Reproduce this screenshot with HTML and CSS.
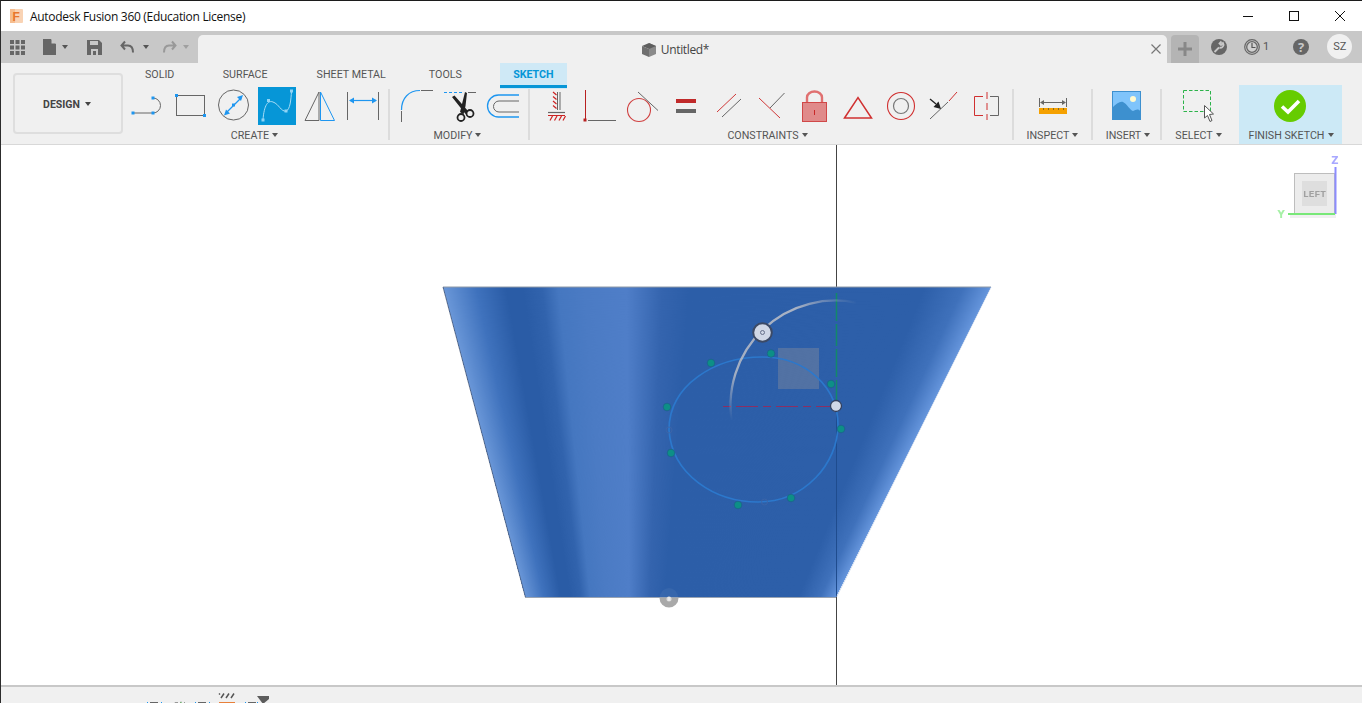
FILE: index.html
```html
<!DOCTYPE html>
<html lang="en">
<head>
<meta charset="utf-8">
<title>Autodesk Fusion 360</title>
<link rel="stylesheet" href="styles.css">
</head>
<body>
<div class="window">
  <header class="titlebar">
    <div class="title-left">
      <svg class="logo" viewBox="0 0 14 15" width="14" height="15"><rect x="0" y="0" width="13" height="14" rx="1" fill="#f9d3b4"/><rect x="0" y="0" width="5" height="14" fill="#f6bd8f"/><text x="2.5" y="11.5" class="logo-f">F</text></svg>
      <span class="title-text">Autodesk Fusion 360 (Education License)</span>
    </div>
    <div class="winbtns">
      <svg viewBox="0 0 12 12" width="12" height="12"><path d="M1 6.500H11" stroke="#111" fill="none"/></svg>
      <svg viewBox="0 0 12 12" width="12" height="12"><rect x="1.500" y="1.500" width="9" height="9" stroke="#111" fill="none"/></svg>
      <svg viewBox="0 0 12 12" width="12" height="12"><path d="M1 1L11 11M11 1L1 11" stroke="#111" fill="none"/></svg>
    </div>
  </header>

  <div class="tabbar">
    <div class="quick">
      <svg class="q-grid" viewBox="0 0 15 15" width="15" height="15"><path fill="#666" d="M0 0h4v4H0zM5.500 0h4v4h-4zM11 0h4v4h-4zM0 5.500h4v4H0zM5.500 5.500h4v4h-4zM11 5.500h4v4h-4zM0 11h4v4H0zM5.500 11h4v4h-4zM11 11h4v4h-4z"/></svg>
      <svg class="q-doc" viewBox="0 0 14 16" width="14" height="16"><path fill="#666" d="M0 0h8l5 5v11H0z"/><path fill="#c8c8c8" d="M8.500 0v4.500H13v-.5L9 0z"/></svg>
      <span class="caret q-c1"></span>
      <svg class="q-save" viewBox="0 0 15 15" width="15" height="15"><path fill="#666" d="M0 0h12l3 3v12H0z"/><path fill="#c8c8c8" d="M3 1h8v4H3zM4 9h7v6H9v-4H6v4H4z"/></svg>
      <svg class="q-undo" viewBox="0 0 15 14" width="15" height="14"><path d="M5 1.500L1.500 5.500 5 9.500M2 5.500h6c4 0 5 3 5 7" fill="none" stroke="#666" stroke-width="2"/></svg>
      <span class="caret q-c2"></span>
      <svg class="q-redo" viewBox="0 0 15 14" width="15" height="14"><path d="M10 1.500L13.500 5.500 10 9.500M13 5.500H7c-4 0-5 3-5 7" fill="none" stroke="#999" stroke-width="2"/></svg>
      <span class="caret caret-light q-c3"></span>
    </div>
    <div class="doc-tab">
      <div class="doc-name">
        <svg viewBox="0 0 16 16" width="16" height="16"><path fill="#8a8a8a" d="M8 1l7 3v8l-7 3z"/><path fill="#5e5e5e" d="M8 1L1 4l7 3 7-3z"/><path fill="#6f6f6f" d="M1 4l7 3v8l-7-3z"/></svg>
        <span>Untitled*</span>
      </div>
      <svg class="doc-close" viewBox="0 0 10 10" width="10" height="10"><path d="M0.500 0.500L9.500 9.500M9.500 0.500L0.500 9.500" stroke="#777" stroke-width="1.200"/></svg>
    </div>
    <div class="new-tab"><svg viewBox="0 0 14 14" width="14" height="14"><path d="M7 0v14M0 7h14" stroke="#888" stroke-width="3"/></svg></div>
    <div class="status">
      <svg class="s-wrench" viewBox="0 0 16 16" width="16" height="16"><circle cx="8" cy="8" r="8" fill="#666"/><path d="M3.500 13L8 8.500M8.500 8.500a3 3 0 0 0 3.500-4.500l-2 2-1.500-1.500 2-2" stroke="#c8c8c8" stroke-width="1.800" fill="none"/></svg>
      <svg class="s-clock" viewBox="0 0 16 16" width="16" height="16"><circle cx="8" cy="8" r="7.300" fill="none" stroke="#666" stroke-width="1.200"/><circle cx="8" cy="8" r="5.300" fill="#d0d0d0" stroke="#666" stroke-width="1.300"/><path d="M8 4v4.500h3.500" stroke="#555" fill="none" stroke-width="1.200"/></svg>
      <span class="s-count">1</span>
      <span class="s-help">?</span>
      <span class="avatar">SZ</span>
    </div>
  </div>

  <div class="toolbar">
    <button class="design">DESIGN<span class="caret"></span></button>
    <div class="workspace">
      <nav class="tabs">
        <span class="tab t-solid">SOLID</span>
        <span class="tab t-surface">SURFACE</span>
        <span class="tab t-metal">SHEET METAL</span>
        <span class="tab t-tools">TOOLS</span>
        <span class="tab t-sketch">SKETCH</span>
      </nav>
      <div class="tools">
        <section class="group g-create">
          <div class="icons">
            <svg viewBox="126 87 43 38" width="43" height="38"><path d="M133 113H153" stroke="#666" fill="none"/><path d="M153 98A7.500 7.500 0 0 1 153 113" stroke="#666" fill="none"/><path fill="#1e96f0" d="M131.500 111.500h3v3h-3zM151.500 111.500h3v3h-3zM151.500 96.500h3v3h-3z"/></svg>
            <svg viewBox="169 87 43 38" width="43" height="38"><rect x="176.500" y="95.500" width="28" height="20" fill="none" stroke="#666"/><path fill="#1e96f0" d="M175 94h3v3h-3zM203 114h3v3h-3z"/></svg>
            <svg viewBox="212 87 43 38" width="43" height="38"><circle cx="233.500" cy="105" r="15" fill="none" stroke="#666"/><path d="M226 113L241 98" stroke="#1e96f0" stroke-width="1.300"/><path fill="#1e96f0" d="M224 115.500l2-6 4 4zM243 95l-6 2 4 4zM232 103.500h3v3h-3z"/></svg>
            <svg class="active" viewBox="255 87 43 38" width="43" height="38"><rect x="258" y="87" width="38" height="38" fill="#0696d7"/><path d="M263 120C264 105 268 100 273 102C279 104 281 112 286 111C290 110 291 100 291.500 91" fill="none" stroke="#a6dcf5"/><path fill="#8fd4f5" d="M261.500 118.500h3v3h-3zM267 99h3v3h-3zM284.500 109.500h3v3h-3zM290 89.500h3v3h-3z"/></svg>
            <svg viewBox="298 87 43 38" width="43" height="38"><path d="M305 120.500L319 92V120.500Z" fill="none" stroke="#666"/><path d="M320.500 92L334.500 120.500H320.500Z" fill="none" stroke="#1e96f0"/></svg>
            <svg viewBox="341 87 43 38" width="43" height="38"><path d="M347.500 92V120M378.500 92V120" stroke="#666" fill="none"/><path d="M350 100.500H376" stroke="#1e96f0" stroke-width="1.200"/><path fill="#1e96f0" d="M349 100.500l5-3v6zM377 100.500l-5-3v6z"/></svg>
          </div>
          <div class="label">CREATE<span class="caret"></span></div>
        </section>
        <i class="sep"></i>
        <section class="group g-modify">
          <div class="icons">
            <svg viewBox="395 87 43 38" width="43" height="38"><path d="M401.500 110C401.500 98 409 90.500 420 90.500" fill="none" stroke="#1e96f0" stroke-width="1.200"/><path d="M401.500 111V122M421 90.500H433" fill="none" stroke="#666"/></svg>
            <svg viewBox="438 87 43 38" width="43" height="38"><path d="M444 92.500H464" stroke="#1e96f0" stroke-dasharray="3 2"/><path d="M468 92.500H476" stroke="#666"/><path fill="#222" d="M452 97L454.500 95.500L468 111L465.500 114ZM465 92L467 93L465.500 106L463.500 114.500L460 112Z"/><circle cx="461" cy="117.500" r="3.500" fill="none" stroke="#222" stroke-width="1.800"/><circle cx="470" cy="113.500" r="3.500" fill="none" stroke="#222" stroke-width="1.800"/></svg>
            <svg viewBox="481 87 43 38" width="43" height="38"><path d="M519 95H498.500A11 11 0 0 0 498.500 117H519" fill="none" stroke="#1e96f0" stroke-width="1.300"/><path d="M519 101H499A5.500 5.500 0 0 0 499 112H519" fill="none" stroke="#666"/></svg>
          </div>
          <div class="label">MODIFY<span class="caret"></span></div>
        </section>
        <i class="sep"></i>
        <section class="group g-constraints">
          <div class="icons">
            <svg viewBox="535 87 43 38" width="43" height="38"><path d="M557.500 92V110M560 92V110" stroke="#666" fill="none"/><path d="M548 112.500H565" stroke="#666" stroke-width="1.200" fill="none"/><path d="M548 115.500H565M556.500 95l-3.500 -3M556.500 99.500l-3.500 -3M556.500 104l-3.500 -3M556.500 108.500l-3.500 -3M550 120.500l2.500-4.500M554.500 120.500l2.500-4.500M559 120.500l2.500-4.500M563 120.500l2.500-4.500" stroke="#cc2222" stroke-width="1.200" fill="none"/></svg>
            <svg viewBox="578 87 43 38" width="43" height="38"><path d="M585.500 90V119" stroke="#b82020" fill="none"/><rect x="583.500" y="118.500" width="3" height="3" fill="#b82020"/><path d="M588 120.500H616" stroke="#666" fill="none"/></svg>
            <svg viewBox="621 87 43 38" width="43" height="38"><circle cx="639" cy="110" r="11.500" fill="none" stroke="#d04040" stroke-width="1.100"/><path d="M638 92L658 110.500" stroke="#666" fill="none"/></svg>
            <svg viewBox="664 87 43 38" width="43" height="38"><rect x="676" y="99" width="20" height="4" fill="#c02a2a"/><rect x="676" y="109" width="20" height="4" fill="#666"/></svg>
            <svg viewBox="707 87 43 38" width="43" height="38"><path d="M717 112L736 94" stroke="#d03838" fill="none"/><path d="M722 117L741 99" stroke="#666" fill="none"/></svg>
            <svg viewBox="750 87 43 38" width="43" height="38"><path d="M759 98L780 118" stroke="#d03838" fill="none"/><path d="M770 108L784.500 93" stroke="#666" fill="none"/></svg>
            <svg viewBox="793 87 43 38" width="43" height="38"><path d="M807 102V97.500A7.500 6 0 0 1 822 97.500V102" fill="none" stroke="#e07070" stroke-width="2.400"/><rect x="802.500" y="102.500" width="24" height="19" fill="#e08a8a" stroke="#d04848"/><path d="M814.500 110V115" stroke="#c82828"/></svg>
            <svg viewBox="836 87 43 38" width="43" height="38"><path d="M844.500 118L858 97.500L871.500 118Z" fill="none" stroke="#d03030" stroke-width="1.500"/></svg>
            <svg viewBox="879 87 43 38" width="43" height="38"><circle cx="901" cy="106" r="13.500" fill="none" stroke="#d03030" stroke-width="1.100"/><circle cx="901" cy="106" r="7.500" fill="none" stroke="#777" stroke-width="1.200"/></svg>
            <svg viewBox="922 87 43 38" width="43" height="38"><path d="M930 119L948 102" stroke="#666" fill="none"/><path d="M949 101L957 92" stroke="#d03030" fill="none"/><path d="M930 99L936 104" stroke="#222" fill="none" stroke-width="1.300"/><path fill="#222" d="M941 109L933.500 107L938.500 101.500Z"/></svg>
            <svg viewBox="965 87 43 38" width="43" height="38"><path d="M987 92V99M987 103V110M987 114V120" stroke="#d03030" fill="none"/><path d="M983 96.500H974.500V115.500H983" stroke="#d03030" fill="none"/><path d="M990 96.500H998.500V115.500H990" stroke="#666" fill="none"/></svg>
          </div>
          <div class="label">CONSTRAINTS<span class="caret"></span></div>
        </section>
        <i class="sep"></i>
        <section class="group g-inspect">
          <div class="icons">
            <svg viewBox="1019 87 68 38" width="68" height="38"><path d="M1039.500 98V107M1066.500 98V107" stroke="#666" fill="none"/><path d="M1042 102.500H1064" stroke="#666"/><path fill="#666" d="M1040 102.500l4-2.500v5zM1066 102.500l-4-2.500v5z"/><rect x="1039" y="108" width="28" height="6" fill="#f5a100"/><path d="M1043.500 108v2M1048.500 108v2M1053.500 108v2M1058.500 108v2M1063.500 108v2" stroke="#8a6a20"/></svg>
          </div>
          <div class="label">INSPECT<span class="caret"></span></div>
        </section>
        <i class="sep"></i>
        <section class="group g-insert">
          <div class="icons">
            <svg viewBox="1098 87 58 38" width="58" height="38"><rect x="1112" y="91" width="29" height="29" fill="#7fc4fb"/><path fill="#3d90cf" d="M1112 108C1116 104 1120 101 1123 102C1127 104 1130 110 1133 111C1136 110 1138 108 1141 112V120H1112Z"/><circle cx="1133" cy="99" r="3" fill="#fffad0"/><rect x="1112.500" y="91.500" width="28" height="28" fill="none" stroke="#3d90cf"/></svg>
          </div>
          <div class="label">INSERT<span class="caret"></span></div>
        </section>
        <i class="sep"></i>
        <section class="group g-select">
          <div class="icons">
            <svg viewBox="1167 87 60 38" width="60" height="38"><rect x="1183.500" y="90.500" width="27" height="21" fill="none" stroke="#2cb34a" stroke-dasharray="3.500 2"/><path d="M1204.500 105.500V118L1207.500 115.500L1210 121.500L1212 120.500L1209.500 114.500L1213.500 114Z" fill="#fff" stroke="#555"/></svg>
          </div>
          <div class="label">SELECT<span class="caret"></span></div>
        </section>
        <section class="finish">
          <svg viewBox="1239 85 103 40" width="103" height="40"><circle cx="1290" cy="106" r="16" fill="#66cc00"/><path d="M1282 106.500L1288 112L1299 101" fill="none" stroke="#fff" stroke-width="3.600"/></svg>
          <div class="label">FINISH SKETCH<span class="caret"></span></div>
        </section>
      </div>
    </div>
  </div>

  <main class="canvas">
    <div class="body3d"></div>
    <svg class="overlay" viewBox="0 145 1362 540" width="1362" height="540">
      <defs>
        <linearGradient id="arcfade" gradientUnits="userSpaceOnUse" x1="731" y1="420" x2="855" y2="300">
          <stop offset="0" stop-color="#b8bcc6" stop-opacity="0"/>
          <stop offset="0.2" stop-color="#b8bcc6" stop-opacity="0.85"/>
          <stop offset="0.72" stop-color="#b8bcc6" stop-opacity="0.9"/>
          <stop offset="1" stop-color="#b8bcc6" stop-opacity="0"/>
        </linearGradient>
      </defs>
      <path d="M836.500 145V287" stroke="#444" fill="none"/>
      <path d="M836.500 597V685" stroke="#444" fill="none"/>
      <path d="M836.500 410V597" stroke="#1f4c8e" fill="none"/>
      <path d="M443 287H991" stroke="#8f9aa8" fill="none"/>
      <path d="M443 287L525.500 597.500" stroke="#4a5a78" fill="none" stroke-width="0.800"/>
      <path d="M525 597.500H836" stroke="#9aa4b2" fill="none"/>
      <path d="M991 287L836.500 597" stroke="#9db8e0" fill="none" stroke-width="0.600"/>
      <path d="M659.500 598A9.500 9.500 0 0 0 678.500 598Z" fill="#a9a9a9"/>
      <circle cx="669" cy="599" r="2.500" fill="#dcdcdc"/>
      <path d="M669 597V601" stroke="#eee" stroke-width="1.500"/>
      <path d="M660 597A9 9 0 0 1 678 597Z" fill="#ffffff" fill-opacity="0.05"/>
      <rect x="778" y="348" width="41" height="41" fill="#a8a098" fill-opacity="0.3"/>
      <path d="M669 430C669 385 715 357 762 357C807 357 838 388 838 425C838 463 805 502 758 502C715 502 672 475 669 430Z" fill="none" stroke="#2c78cc" stroke-width="1.700"/>
      <path d="M723 406.500H832" stroke="#8a2f64" stroke-width="1.200" stroke-dasharray="8 5 22 5"/>
      <path d="M836.500 293V400" stroke="#13896a" stroke-width="1.500" stroke-dasharray="28 3 22 3"/>
      <path d="M731.500 420A105 105 0 0 1 856 302.500" fill="none" stroke="url(#arcfade)" stroke-width="2.300"/>
      <g class="dots">
        <circle cx="711" cy="363" r="3.800"/>
        <circle cx="771" cy="353.500" r="3.800"/>
        <circle cx="831" cy="384" r="3.800"/>
        <circle cx="841" cy="429" r="3.800"/>
        <circle cx="791" cy="498" r="3.800"/>
        <circle cx="738" cy="505" r="3.800"/>
        <circle cx="671" cy="453" r="3.800"/>
        <circle cx="667" cy="407" r="3.800"/>
      </g>
      <g class="hollow">
        <circle cx="669" cy="430" r="3"/>
        <circle cx="764.500" cy="502" r="3"/>
      </g>
      <circle cx="762.500" cy="332.500" r="9.300" fill="#cfd7e6" stroke="#3c4a66" stroke-width="2"/>
      <circle cx="762.500" cy="332.500" r="2" fill="none" stroke="#66708a"/>
      <circle cx="836" cy="406" r="5.500" fill="#d0d8e8" stroke="#33415f" stroke-width="1.300"/>

      <rect x="1290" y="213" width="46" height="5" fill="#000" fill-opacity="0.06"/>
      <rect x="1294.500" y="173.500" width="40" height="40" fill="#ececec" stroke="#bdbdbd"/>
      <rect x="1302" y="181" width="25" height="25" fill="#dedede"/>
      <text x="1314.500" y="197" class="cube-text">LEFT</text>
      <path d="M1335.500 167V214" stroke="#8c8cff" stroke-width="2"/>
      <path d="M1288 214H1335" stroke="#78e878" stroke-width="2"/>
      <text x="1335" y="164" class="axis axis-z">Z</text>
      <text x="1281" y="218" class="axis axis-y">Y</text>
    </svg>
  </main>

  <footer class="bottombar">
    <svg viewBox="0 686 1362 17" width="1362" height="17">
      <path d="M62.500 702V703" stroke="#666"/>
      <path d="M147.500 701V703M161.500 701V703" stroke="#1e96f0"/>
      <path d="M150 701.500H158" stroke="#666"/>
      <path d="M175 703V701.500H178M180 703L181 700.500M183 703L185 701" stroke="#999" fill="none"/>
      <path d="M181 703V701" stroke="#4bb04b"/>
      <path d="M195.500 701V703M209.500 701V703" stroke="#1e96f0"/>
      <path d="M198 701.500H206" stroke="#666"/>
      <path d="M219 693.500l1-1M221 697L224 692.500M226 697L229 692.500M231 697L234 692.500" stroke="#555" stroke-width="1.500"/>
      <rect x="219.500" y="701.500" width="15" height="4" fill="#f8c8a0" stroke="#e8803a"/>
      <path d="M245.500 701V703M257.500 701V703" stroke="#1e96f0"/>
      <path d="M248 701.500H256" stroke="#666"/>
      <path d="M257 695H269V698L263 703H263Z" fill="#5c5c5c"/>
      <path d="M1341 702V703" stroke="#666"/>
    </svg>
  </footer>
</div>
</body>
</html>
```
FILE: styles.css
```css
* { box-sizing: border-box; }
html, body { margin: 0; padding: 0; width: 1362px; height: 703px; overflow: hidden; background: #fff; }
body { font-family: "Roboto", "Liberation Sans", sans-serif; color: #555; }
svg { display: block; flex: none; }

.window { width: 1362px; height: 703px; display: flex; flex-direction: column; border-top: 1px solid #1c1c1c; border-left: 1px solid #2c2c2c; overflow: hidden; }

/* Title bar */
.titlebar { height: 30px; flex: none; display: flex; align-items: center; justify-content: space-between; background: #fff; }
.title-left { display: flex; align-items: center; padding-left: 9px; }
.logo { margin-right: 6px; }
.logo-f { font: 700 12px "Liberation Sans", sans-serif; fill: #e8762c; }
.title-text { font: 12px "Open Sans", sans-serif; color: #111; letter-spacing: -0.3px; }
.winbtns { display: flex; gap: 34px; padding-right: 16px; }

/* Tab bar */
.tabbar { height: 32px; flex: none; display: flex; background: #c8c8c8; }
.quick { width: 197px; flex: none; display: flex; align-items: center; position: relative; }
.caret { display: inline-block; width: 0; height: 0; border-left: 3.500px solid transparent; border-right: 3.500px solid transparent; border-top: 4px solid #555; margin-left: 3px; vertical-align: 2px; }
.caret-light { border-top-color: #a0a0a0; }
.q-grid { margin-left: 9px; }
.q-doc { margin-left: 18px; margin-top: -1px; }
.q-c1 { margin-left: 5px; }
.q-save { margin-left: 19px; }
.q-undo { margin-left: 18px; }
.q-c2 { margin-left: 8px; }
.q-redo { margin-left: 13px; }
.q-c3 { margin-left: 6px; }
.doc-tab { margin-top: 4px; width: 969px; flex: none; background: #f0f0f0; border-radius: 5px 5px 0 0; display: flex; align-items: center; justify-content: center; position: relative; }
.doc-name { display: flex; align-items: center; gap: 4px; font: 12px "Open Sans", sans-serif; letter-spacing: -0.35px; color: #444; margin-left: -15px; margin-top: 1px; }
.doc-close { position: absolute; right: 6px; top: 9px; }
.new-tab { margin: 4px 0 0 4px; width: 28px; flex: none; background: #b4b4b4; border-radius: 4px 4px 0 0; display: flex; align-items: center; justify-content: center; }
.status { display: flex; align-items: center; flex: 1; position: relative; margin-top: -1px; }
.s-wrench { margin-left: 12px; }
.s-clock { margin-left: 17px; }
.s-count { font-size: 11px; color: #555; margin-left: 3px; }
.s-help { width: 16px; height: 16px; border-radius: 50%; background: #666; color: #c8c8c8; font: 700 13px/16px "Open Sans", sans-serif; text-align: center; margin-left: 24px; }
.avatar { width: 25px; height: 25px; border-radius: 50%; background: #f0f0f0; color: #555; font-size: 11px; line-height: 25px; text-align: center; margin-left: 18px; }

/* Toolbar */
.toolbar { height: 82px; flex: none; display: flex; background: #f0f0f0; border-bottom: 1px solid #d8d8d8; }
.design { width: 110px; height: 61px; margin: 10px 0 0 12px; flex: none; background: #f0f0f0; border: 2px solid #dedede; border-radius: 4px; font: 700 10.500px "Roboto", sans-serif; color: #444; padding: 2px 2px 0 0; }
.design .caret { margin-left: 5px; border-top-color: #444; }
.workspace { flex: 1; display: flex; flex-direction: column; min-width: 0; }
.tabs { height: 24px; display: flex; align-items: flex-start; flex: none; padding-left: 22px; }
.tab { font-size: 10.700px; color: #555; height: 24px; line-height: 23px; }
.t-surface { margin-left: 48.400px; }
.t-metal { margin-left: 49px; }
.t-tools { margin-left: 43px; }
.t-sketch { margin-left: 38px; width: 67px; text-align: center; background: #cfe9f6; color: #0696d7; font-weight: 700; border-bottom: 3px solid #0696d7; height: 25px; box-shadow: 0 1px 0 #cfe9f6; }
.tools { display: flex; flex: 1; padding-left: 3px; }
.group { display: flex; flex-direction: column; flex: none; }
.icons { display: flex; height: 38px; flex: none; }
.label { font-size: 10.700px; color: #555; text-align: center; line-height: 21px; white-space: nowrap; }
.label .caret { margin-left: 3px; border-left-width: 3px; border-right-width: 3px; }
.sep { width: 2px; height: 51px; background: #dcdcdc; margin: 2px 5px 0 4px; flex: none; }
.g-create { width: 258px; }
.g-create .label { padding-right: 1px; }
.g-modify { width: 129px; }
.g-modify .label { padding-right: 4px; }
.g-constraints { width: 473px; }
.g-constraints .label { padding-right: 8px; }
.g-inspect { width: 68px; }
.g-inspect .label { padding-right: 1px; }
.g-insert { width: 58px; }
.g-insert .label { padding-left: 2px; }
.g-select { width: 60px; }
.g-select .label { padding-left: 3px; }
.finish { width: 103px; margin: -2px 0 0 12px; height: 59px; background: #cce9f6; flex: none; display: flex; flex-direction: column; }
.finish .label { line-height: 21px; padding-left: 1px; }

/* Canvas */
.canvas { height: 540px; flex: none; position: relative; background: #fff; margin-left: -1px; overflow: hidden; }
.overlay { position: absolute; left: 0; top: 0; }
.body3d { position: absolute; left: 443px; top: 142px; width: 548px; height: 310px; transform-origin: 0 0; transform: matrix3d(1,0,0,0, 0.46609,1.76206,0,0.0024583, 0,0,1,0, 0,0,0,1);
  background: linear-gradient(90deg, #6a97d8 0, #3f72bd 6%, #2a5ca6 11.500%, #2a5ca6 14.500%, #3163ad 18%, #4577c0 21%, #4b7bc4 26%, #4f7ec8 33.500%, #3464ae 40%, #2c5ea8 45%, #2d5fa9 88%, #3f71bb 95%, #6595dc 100%); }
.dots circle { fill: #0d8f86; stroke: #1c5f8a; stroke-width: 0.700; }
.hollow circle { fill: none; stroke: #3d65a8; stroke-width: 0.900; }
.cube-text { font: 700 9.500px "Liberation Mono", monospace; fill: #a0a0a0; text-anchor: middle; }
.axis { font: 700 10px "DejaVu Sans", sans-serif; text-anchor: middle; }
.axis-z { fill: #a8a8ff; }
.axis-y { fill: #a6f0a6; }

/* Bottom bar */
.bottombar { flex: 1; background: #f0f0f0; border-top: 2px solid #c8c8c8; margin-left: -1px; overflow: hidden; min-height: 0; }
```
